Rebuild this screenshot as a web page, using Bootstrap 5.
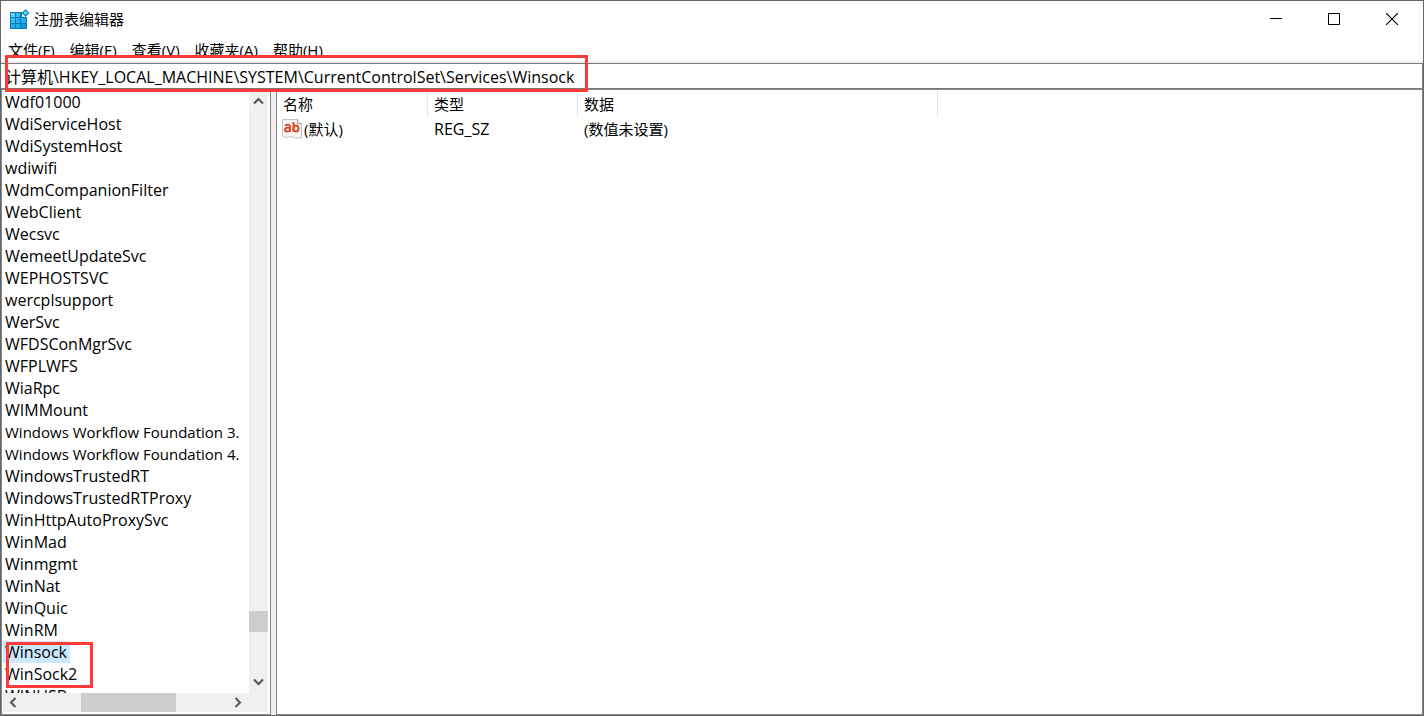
<!DOCTYPE html>
<html lang="zh-CN">
<head>
<meta charset="utf-8">
<meta name="viewport" content="width=device-width, initial-scale=1">
<title>注册表编辑器</title>
<link href="https://cdn.jsdelivr.net/npm/bootstrap@5.3.0/dist/css/bootstrap.min.css" rel="stylesheet">
<style>
body{font:15px/22px "Open Sans","Noto Sans CJK SC",sans-serif;color:#000;background:#fff}
button{border:0;background:none;padding:0;color:inherit}
svg{display:block}
.win{border:1px solid #666;height:100vh;min-height:320px}
.titlebar{height:36px;padding-left:8px}
.app-title{font-size:15px;line-height:22px;margin:0 0 0 4px;font-weight:400}
.caption-btn{width:58px;height:36px;display:flex;align-items:center;justify-content:center}
.captions{margin-right:2px}
.menus{height:21px;padding:2px 7px 0;gap:15px;overflow:hidden;margin-bottom:3px}
.menus a{color:#000;text-decoration:none;white-space:nowrap}
.address{border-top:2px solid #f0f0f0}
.address input{display:block;width:100%;height:26px;border:1px solid #7a7a7a;border-width:1px 1px 1px 0;padding:0 0 1px 4px;outline:0;color:#000;font-size:16px}
.callout{position:absolute;border:3px solid #ff3838;pointer-events:none;z-index:3}
.callout-address{left:4px;top:-8px;width:583px;height:37px}
.callout-keys{left:3px;top:1px;width:87px;height:46px}
.panes{background:#f0f0f0;gap:5px;min-height:0}
.tree{width:270px;border:1px solid #828790;background:#fff;padding:1px 2px 2px 1px}
.keys{overflow:hidden;min-width:0;background:#fff;font-size:16px}
.keys ul{height:0}
.keys li{height:22px;white-space:nowrap}
.keys li a{display:inline-block;color:#000;text-decoration:none;padding:0 3px 0 2px}
.keys li.long-name{font-size:15px}
.keys li.chosen{position:relative}
.keys li.chosen a{background:#cce8ff}
.bar-v{width:19px;background:#f0f0f0;padding-bottom:2px}
.bar-h{height:19px;background:#f0f0f0;padding-right:21px}
.bar-v button,.bar-h button{width:19px;height:19px;display:flex;align-items:center;justify-content:center;flex:none}
.groove{position:relative;flex:1 1 0}
.thumb{position:absolute;background:#cdcdcd}
.bar-v .thumb{left:0;right:0;height:21px}
.bar-h .thumb{top:0;bottom:0}
.values{border:1px solid #828790;background:#fff;min-width:0;overflow:hidden}
.values table{table-layout:fixed;width:661px;border-collapse:separate;border-spacing:0}
.values th{font-weight:400;height:27px;padding:1px 0 0 6px;border-right:1px solid #e5e5e5}
.values td{height:24px;padding:0 0 0 6px;white-space:nowrap}
.values td:first-child{padding-left:5px}
.values .c-name{width:151px}
.values .c-type{width:150px}
.values .value-type{font-size:16px}
.value-name{gap:2px}
</style>
<script src="https://cdn.jsdelivr.net/npm/bootstrap@5.3.0/dist/js/bootstrap.bundle.min.js"></script>
</head>
<body>
<div class="win d-flex flex-column">
  <header class="titlebar d-flex align-items-center">
    <svg width="21" height="21" viewBox="0 0 21 21" aria-hidden="true">
      <path fill="#087cb8" d="M1 3h12v5h5v12H1z"/>
      <path fill="#65d2f7" d="M2 4h4v4H2z"/><path fill="#38bdee" d="M7 4h4v4H7zM2 9h4v5H2z"/>
      <path fill="#22aee6" d="M7 9h4v5H7zM12 9h5v5h-5zM2 15h4v4H2zM7 15h4v4H7z"/><path fill="#1798d2" d="M12 15h5v4h-5z"/>
      <path fill="#218bb8" d="m16.500 0 4 4-4 4-4-4z"/><path fill="#7dd7f2" d="m16.500 2 2 2-2 2-2-2z"/>
    </svg>
    <h1 class="app-title">注册表编辑器</h1>
    <div class="captions d-flex ms-auto">
      <button class="caption-btn" type="button" aria-label="最小化"><svg width="12" height="12"><path d="M0 5.500h12" stroke="#000"/></svg></button>
      <button class="caption-btn" type="button" aria-label="最大化"><svg width="12" height="12"><path d="M.5.500h11v11H.5z" fill="none" stroke="#000"/></svg></button>
      <button class="caption-btn" type="button" aria-label="关闭"><svg width="12" height="12"><path d="m0 0 12 12M12 0 0 12" stroke="#000" stroke-width="1.200"/></svg></button>
    </div>
  </header>
  <nav class="menus d-flex">
    <a href="#">文件(F)</a><a href="#">编辑(E)</a><a href="#">查看(V)</a><a href="#">收藏夹(A)</a><a href="#">帮助(H)</a>
  </nav>
  <div class="address position-relative">
    <input type="text" aria-label="地址" value="计算机\HKEY_LOCAL_MACHINE\SYSTEM\CurrentControlSet\Services\Winsock">
    <div class="callout callout-address"></div>
  </div>
  <main class="panes d-flex flex-grow-1">
    <section class="tree d-flex flex-column flex-shrink-0">
      <div class="d-flex flex-grow-1 overflow-hidden">
        <nav class="keys flex-grow-1" aria-label="注册表项">
          <ul class="list-unstyled mb-0">
            <li><a href="#">Wdf01000</a></li>
            <li><a href="#">WdiServiceHost</a></li>
            <li><a href="#">WdiSystemHost</a></li>
            <li><a href="#">wdiwifi</a></li>
            <li><a href="#">WdmCompanionFilter</a></li>
            <li><a href="#">WebClient</a></li>
            <li><a href="#">Wecsvc</a></li>
            <li><a href="#">WemeetUpdateSvc</a></li>
            <li><a href="#">WEPHOSTSVC</a></li>
            <li><a href="#">wercplsupport</a></li>
            <li><a href="#">WerSvc</a></li>
            <li><a href="#">WFDSConMgrSvc</a></li>
            <li><a href="#">WFPLWFS</a></li>
            <li><a href="#">WiaRpc</a></li>
            <li><a href="#">WIMMount</a></li>
            <li class="long-name"><a href="#">Windows Workflow Foundation 3.</a></li>
            <li class="long-name"><a href="#">Windows Workflow Foundation 4.</a></li>
            <li><a href="#">WindowsTrustedRT</a></li>
            <li><a href="#">WindowsTrustedRTProxy</a></li>
            <li><a href="#">WinHttpAutoProxySvc</a></li>
            <li><a href="#">WinMad</a></li>
            <li><a href="#">Winmgmt</a></li>
            <li><a href="#">WinNat</a></li>
            <li><a href="#">WinQuic</a></li>
            <li><a href="#">WinRM</a></li>
            <li class="chosen"><a href="#" aria-current="true">Winsock</a><span class="callout callout-keys"></span></li>
            <li><a href="#">WinSock2</a></li>
            <li><a href="#">WINUSB</a></li>
          </ul>
        </nav>
        <div class="bar-v d-flex flex-column">
          <button type="button" aria-label="向上滚动"><svg width="11" height="8"><path d="m1 6.500 4.500-4.500L10 6.500" fill="none" stroke="#555" stroke-width="2"/></svg></button>
          <div class="groove"><div class="thumb" style="top:89.100%"></div></div>
          <button type="button" aria-label="向下滚动"><svg width="11" height="8"><path d="m1 1.500 4.500 4.500L10 1.500" fill="none" stroke="#555" stroke-width="2"/></svg></button>
        </div>
      </div>
      <div class="bar-h d-flex">
        <button type="button" aria-label="向左滚动"><svg width="8" height="11"><path d="M6.500 1 2 5.500 6.500 10" fill="none" stroke="#555" stroke-width="2"/></svg></button>
        <div class="groove"><div class="thumb" style="left:28.700%;width:46%"></div></div>
        <button type="button" aria-label="向右滚动"><svg width="8" height="11"><path d="M1.500 1 6 5.500 1.500 10" fill="none" stroke="#555" stroke-width="2"/></svg></button>
      </div>
    </section>
    <section class="values flex-grow-1">
      <table>
        <thead><tr><th class="c-name" scope="col">名称</th><th class="c-type" scope="col">类型</th><th scope="col">数据</th></tr></thead>
        <tbody><tr>
          <td><div class="value-name d-flex align-items-center">
            <svg width="20" height="20" viewBox="0 0 20 20" aria-hidden="true">
              <path d="M.5.500h15l4 4V19.500l-3-1-3 1-4-2-4 1-5-1z" fill="#f4f4f4" stroke="#c4c4c4"/>
              <path d="M15.500.500v4h4" fill="#fff" stroke="#999"/>
              <g fill="none" stroke="#d84e2c" stroke-width="2"><path d="M3 6.500q5-2 5 1.500v5M8 8.500q-5 0-5 2t2 2q3 0 3-2M11.500 3v10"/><ellipse cx="14" cy="9.500" rx="2.500" ry="3"/></g>
            </svg><span>(默认)</span></div></td>
          <td class="value-type">REG_SZ</td><td>(数值未设置)</td>
        </tr></tbody>
      </table>
    </section>
  </main>
</div>
</body>
</html>
